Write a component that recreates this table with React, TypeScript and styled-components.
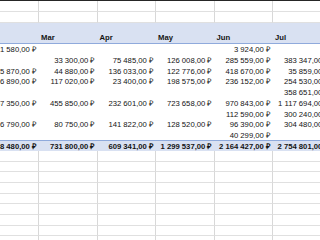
import React from "react";
import styled, { createGlobalStyle } from "styled-components";

const GlobalStyle = createGlobalStyle`
  html, body { margin: 0; padding: 0; background: #ffffff; overflow: hidden; }
`;

const ROW = 10.7;
const COL = 58.5;

const Sheet = styled.div`
  width: 320px;
  height: 240px;
  overflow: hidden;
  background: #ffffff;
  font-family: "Liberation Sans", Arial, sans-serif;
  font-size: 7.7px;
  color: #141414;
`;

const TopBar = styled.div`
  height: 1.3px;
  background: #262626;
`;

const Grid = styled.div`
  display: flex;
  flex-direction: column;
  margin-left: -19.5px;
`;

const Row = styled.div`
  display: grid;
  grid-template-columns: repeat(6, ${COL}px);
  height: ${ROW}px;
`;

const EmptyCell = styled.div`
  box-sizing: border-box;
  border-right: 1px solid #d8d8d8;
  border-bottom: 1px solid #e0e0e0;
`;

const HeaderRow = styled.div`
  display: grid;
  grid-template-columns: repeat(6, ${COL}px);
  height: ${ROW * 2}px;
  box-sizing: border-box;
  background: #d9e1f2;
  border-bottom: 1px solid #8faadc;
`;

const HeaderCell = styled.div`
  align-self: end;
  line-height: ${ROW - 1}px;
  padding-left: 2px;
  font-weight: bold;
  white-space: nowrap;
`;

const DataRow = styled(Row)<{ $total?: boolean }>`
  box-sizing: border-box;
  background: ${(p) => (p.$total ? "#d9e1f2" : "#ffffff")};
  border-top: ${(p) => (p.$total ? "1px solid #8faadc" : "none")};
  font-weight: ${(p) => (p.$total ? "bold" : "normal")};
`;

const ValueCell = styled.div`
  display: flex;
  justify-content: flex-end;
  align-items: center;
  padding-right: 3px;
  white-space: nowrap;
`;

const months = ["Feb", "Mar", "Apr", "May", "Jun", "Jul"];

const rows: string[][] = [
  ["1 580,00 ₽", "", "", "", "3 924,00 ₽", ""],
  ["", "33 300,00 ₽", "75 485,00 ₽", "126 008,00 ₽", "285 559,00 ₽", "383 347,00 ₽"],
  ["15 870,00 ₽", "44 880,00 ₽", "136 033,00 ₽", "122 776,00 ₽", "418 670,00 ₽", "35 859,00 ₽"],
  ["36 890,00 ₽", "117 020,00 ₽", "23 400,00 ₽", "198 575,00 ₽", "236 152,00 ₽", "254 530,00 ₽"],
  ["", "", "", "", "", "358 651,00 ₽"],
  ["157 350,00 ₽", "455 850,00 ₽", "232 601,00 ₽", "723 658,00 ₽", "970 843,00 ₽", "1 117 694,00 ₽"],
  ["", "", "", "", "112 590,00 ₽", "300 240,00 ₽"],
  ["46 790,00 ₽", "80 750,00 ₽", "141 822,00 ₽", "128 520,00 ₽", "96 390,00 ₽", "304 480,00 ₽"],
  ["", "", "", "", "40 299,00 ₽", ""],
];

const totals = ["258 480,00 ₽", "731 800,00 ₽", "609 341,00 ₽", "1 299 537,00 ₽", "2 164 427,00 ₽", "2 754 801,00 ₽"];

const EmptyRow = () => (
  <Row>
    {months.map((m) => (
      <EmptyCell key={m} />
    ))}
  </Row>
);

export default function App() {
  return (
    <>
      <GlobalStyle />
      <Sheet>
        <TopBar />
        <Grid>
          <EmptyRow />
          <EmptyRow />
          <HeaderRow>
            {months.map((m, i) => (
              <HeaderCell key={m}>{i === 0 ? "" : m}</HeaderCell>
            ))}
          </HeaderRow>
          {rows.map((r, ri) => (
            <DataRow key={ri}>
              {r.map((v, ci) => (
                <ValueCell key={ci}>{v}</ValueCell>
              ))}
            </DataRow>
          ))}
          <DataRow $total>
            {totals.map((v, ci) => (
              <ValueCell key={ci}>{v}</ValueCell>
            ))}
          </DataRow>
          {Array.from({ length: 9 }).map((_, i) => (
            <EmptyRow key={i} />
          ))}
        </Grid>
      </Sheet>
    </>
  );
}
